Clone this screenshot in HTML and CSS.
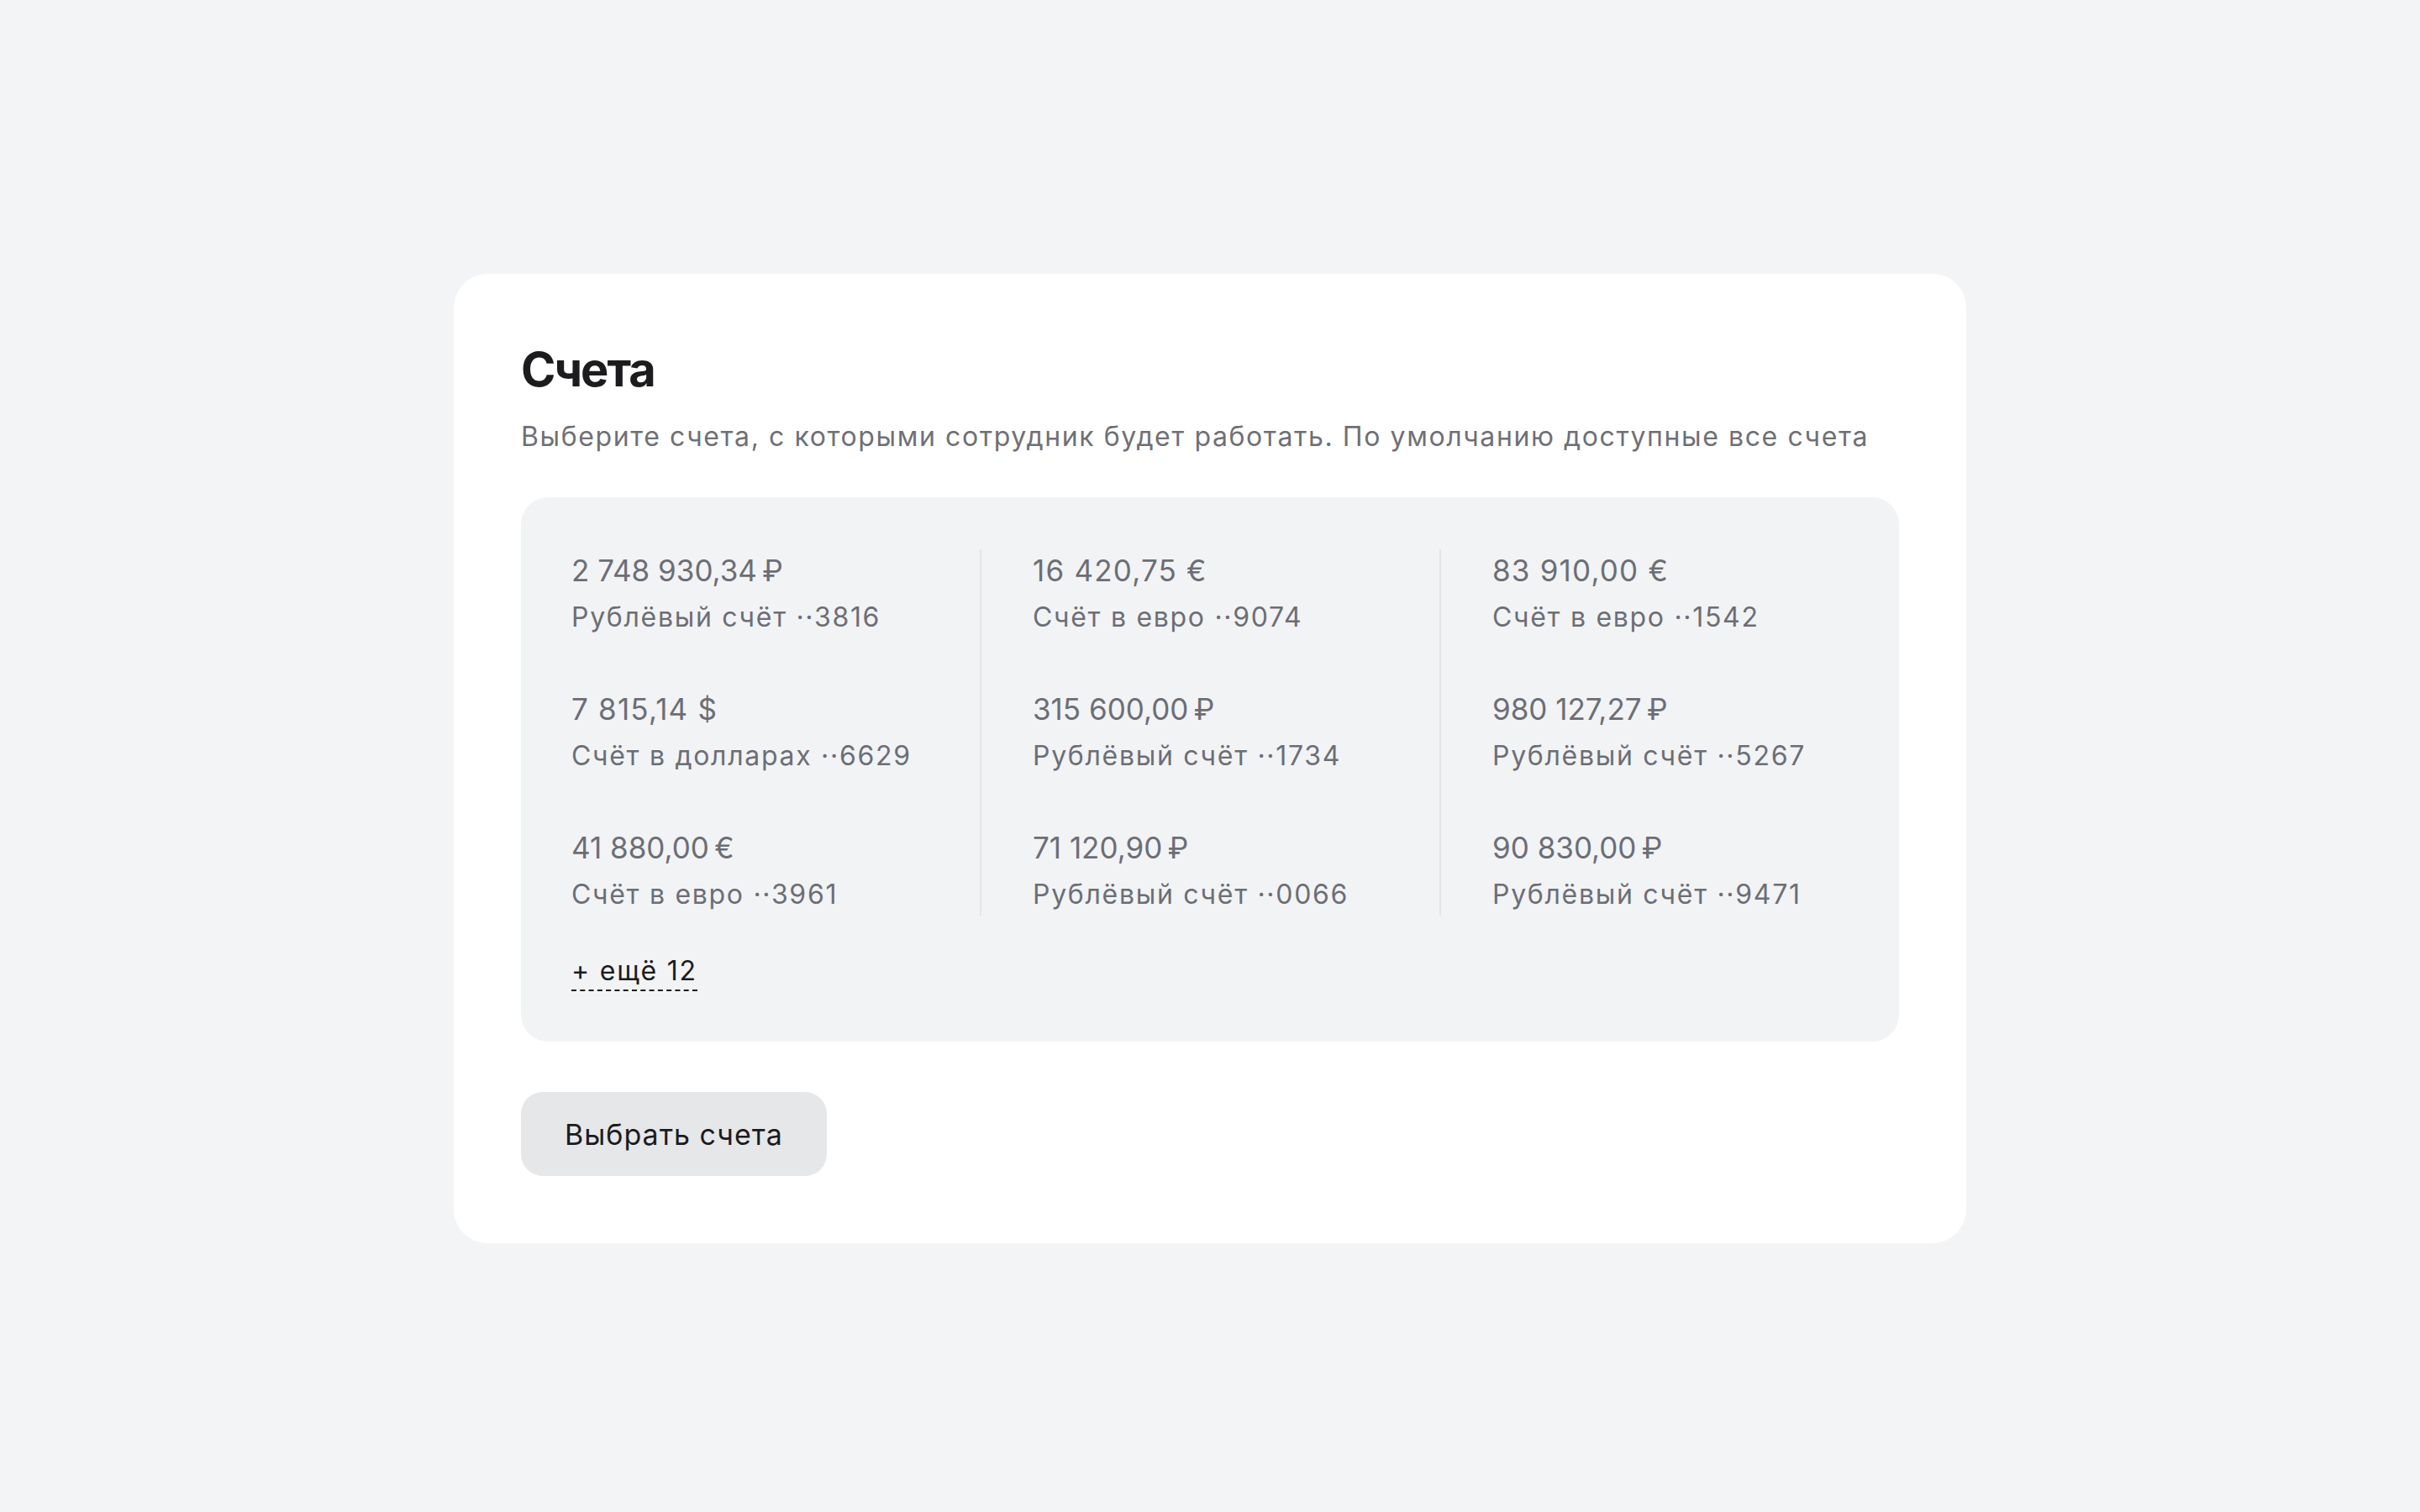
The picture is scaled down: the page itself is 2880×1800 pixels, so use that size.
FILE: index.html
```html
<!DOCTYPE html>
<html lang="ru">
<head>
<meta charset="utf-8">
<title>Счета</title>
<link rel="stylesheet" href="styles.css">
</head>
<body>
<main class="page">
  <section class="card">
    <h1 class="title">Счета</h1>
    <p class="subtitle">Выберите счета, с которыми сотрудник будет работать. По умолчанию доступные все счета</p>
    <div class="panel">
      <div class="grid">
        <div class="col">
          <div class="item"><div class="amount">2&nbsp;748&nbsp;930,34&#8239;₽</div><div class="label">Рублёвый счёт ··3816</div></div>
          <div class="item"><div class="amount">7&nbsp;815,14 $</div><div class="label">Счёт в долларах ··6629</div></div>
          <div class="item"><div class="amount">41&nbsp;880,00&#8239;€</div><div class="label">Счёт в евро ··3961</div></div>
        </div>
        <div class="col col-div">
          <div class="item"><div class="amount">16&nbsp;420,75 €</div><div class="label">Счёт в евро ··9074</div></div>
          <div class="item"><div class="amount">315&nbsp;600,00&#8239;₽</div><div class="label">Рублёвый счёт ··1734</div></div>
          <div class="item"><div class="amount">71&nbsp;120,90&#8239;₽</div><div class="label">Рублёвый счёт ··0066</div></div>
        </div>
        <div class="col col-div">
          <div class="item"><div class="amount">83&nbsp;910,00 €</div><div class="label">Счёт в евро ··1542</div></div>
          <div class="item"><div class="amount">980&nbsp;127,27&#8239;₽</div><div class="label">Рублёвый счёт ··5267</div></div>
          <div class="item"><div class="amount">90&nbsp;830,00&#8239;₽</div><div class="label">Рублёвый счёт ··9471</div></div>
        </div>
      </div>
      <div class="more-row"><span class="more">+ ещё 12</span></div>
    </div>
    <button class="btn" type="button">Выбрать счета</button>
  </section>
</main>
</body>
</html>
```
FILE: styles.css
```css
* { box-sizing: border-box; }
html, body {
  margin: 0;
  padding: 0;
  background: #f3f4f6;
  font-family: Inter, "Noto Sans", "Liberation Sans", sans-serif;
}
.page {
  width: 2880px;
  height: 1800px;
  padding-top: 6px;
  display: flex;
  align-items: center;
  justify-content: center;
}
.card {
  width: 1800px;
  background: #ffffff;
  border-radius: 40px;
  padding: 80px;
  display: flex;
  flex-direction: column;
  align-items: flex-start;
}
.title {
  margin: 0;
  font-size: 56px;
  line-height: 68px;
  font-weight: 700;
  color: #1c1c1e;
  letter-spacing: -2px;
}
.subtitle {
  margin: 22px 0 0;
  font-size: 32px;
  line-height: 48px;
  color: #6f7076;
  letter-spacing: 1.6px;
}
.panel {
  margin-top: 48px;
  align-self: stretch;
  background: #f2f3f5;
  border-radius: 32px;
  padding: 62px 60px 60px;
}
.grid {
  display: grid;
  grid-template-columns: 486px 547px 1fr;
}
.col {
  display: flex;
  flex-direction: column;
  gap: 59px;
}
.col-div {
  border-left: 2px solid #e4e5e8;
  padding-left: 61px;
}
.item {
  display: flex;
  flex-direction: column;
}
.amount {
  font-size: 35px;
  line-height: 50px;
  color: #6c6e75;
  letter-spacing: 1.2px;
}
.label {
  margin-top: 6px;
  font-size: 32px;
  line-height: 50px;
  color: #6c6e75;
  letter-spacing: 1.7px;
}
.more-row {
  margin-top: 44px;
}
.more {
  display: inline-block;
  font-size: 32px;
  line-height: 44px;
  color: #1c1c1e;
  letter-spacing: 1.8px;
  border-bottom: 2px dashed #1c1c1e;
}
.btn {
  margin-top: 60px;
  height: 100px;
  padding: 0 52px;
  border: none;
  border-radius: 26px;
  background: #e6e7e9;
  font-family: inherit;
  font-size: 34px;
  letter-spacing: 1px;
  color: #1c1c1e;
}
```
